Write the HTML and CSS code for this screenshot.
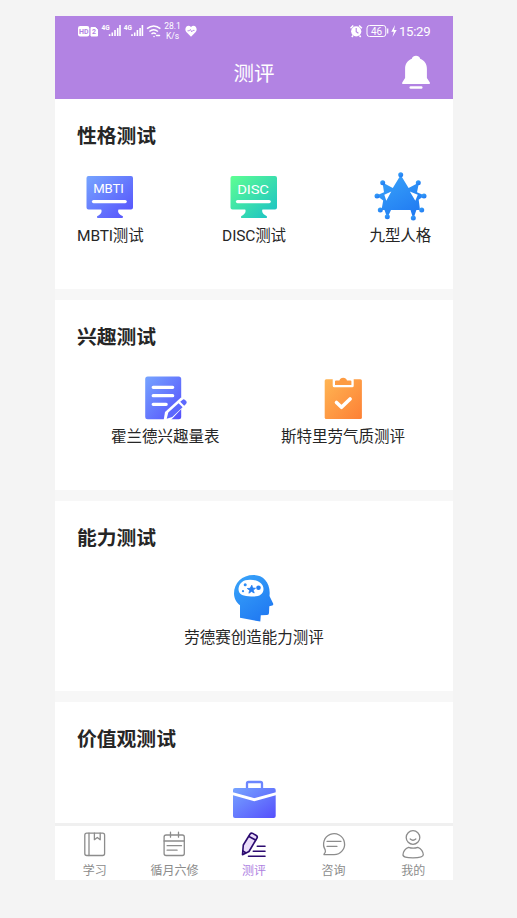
FILE: index.html
```html
<!DOCTYPE html>
<html lang="zh-CN">
<head>
<meta charset="utf-8">
<title>测评</title>
<link rel="stylesheet" href="styles.css">
</head>
<body>
<svg class="defs" width="0" height="0" aria-hidden="true">
  <defs>
    <linearGradient id="indigo" x1="0" y1="0" x2="1" y2="1"><stop offset="0" stop-color="#76a4ff"/><stop offset="1" stop-color="#554ffc"/></linearGradient>
    <linearGradient id="green" x1="0" y1="0" x2="1" y2="1"><stop offset="0" stop-color="#5eff92"/><stop offset="1" stop-color="#18bfc8"/></linearGradient>
    <linearGradient id="blue" x1="0" y1="0" x2=".6" y2="1"><stop offset="0" stop-color="#39a5fa"/><stop offset="1" stop-color="#217bf2"/></linearGradient>
    <linearGradient id="orange" x1="0" y1="0" x2="1" y2="1"><stop offset="0" stop-color="#ffb553"/><stop offset="1" stop-color="#fd8035"/></linearGradient>
  </defs>
</svg>
<div class="phone">
  <header class="header">
    <div class="status">
      <svg width="86" height="22" viewBox="0 0 86 22">
        <rect x="1" y="6" width="11.3" height="10.5" rx="2.2" fill="#fff"/>
        <text x="2" y="14" class="chip">HD</text>
        <path d="M14 7.5h4.500l2 2v6.500H14z" fill="#fff" stroke="#fff" stroke-linejoin="round"/>
        <text x="15" y="14.300" class="chip">2</text>
        <text x="24.500" y="10.200" class="net">4G</text>
        <path d="M32.600 16v-1.700M35.300 16v-3.500M38 16v-6M40.700 16V8M43 16V5" stroke="#fff" stroke-width="1.600"/>
        <text x="46.800" y="10.200" class="net">4G</text>
        <path d="M55 16v-1.700M57.700 16v-3.500M60.400 16v-6M63.100 16V8M65.400 16V5" stroke="#fff" stroke-width="1.600"/>
        <g fill="none" stroke="#fff" stroke-width="1.500"><path d="M70 8.700q6.700-5.500 13.400 0M72.400 11.500q4.300-3.500 8.600 0M74.500 14q2.200-1.800 4.400 0"/><path d="M77 16.500h.1M79.500 15.500h3" stroke-linecap="round"/></g>
      </svg>
      <div class="speed"><span>28.1</span><span>K/s</span></div>
      <svg class="heart" width="14" height="22" viewBox="0 0 14 22"><path d="M7 16.700 2.300 12C-.5 8.500 3.500 3.500 7 7c3.500-3.500 7.500 1.500 4.700 5z" fill="#fff"/><path d="M3.500 10.800h1.700l1.200-1.400 1.300 2.500 1.200-1.500h1.600" fill="none" stroke="#b283e3" stroke-width=".9"/></svg>
      <svg class="push" width="49" height="22" viewBox="0 0 49 22">
        <circle cx="6.200" cy="11.300" r="5.100" fill="#fff"/><path d="M.5 8.200 3.300 5.500M9.100 5.500l2.800 2.700M3 15.500 1.800 17M9.500 15.500l1.200 1.500" stroke="#fff" stroke-width="1.500"/><path d="M6.200 8v3.700l2.200 1.500" fill="none" stroke="#b283e3" stroke-width="1.100"/>
        <rect x="17" y="5.500" width="18.800" height="11" rx="2.500" fill="none" stroke="#fff"/><path d="M37.700 8.500v5" stroke="#fff" stroke-width="1.200"/><text x="20.900" y="14.700" class="battery">46</text>
        <path d="m45 5-3.700 6.800h2.500L42.500 17l4.200-7h-2.600z" fill="#fff"/>
      </svg>
      <span class="time">15:29</span>
    </div>
    <div class="navbar">
      <span></span>
      <h1>测评</h1>
      <svg class="bell" width="30" height="36" viewBox="0 0 30 36" fill="#fff"><path d="M10.800 4.700a4.500 4.500 0 0 1 8.400 0c4.500 1.700 6.700 5.500 6.700 10V24l2.800 4.200c.7 1.100.1 1.800-.8 1.800H2.200c-1 0-1.500-.8-.8-1.800L4.100 24v-9.300c0-4.500 2.200-8.300 6.700-10z"/><rect x="8.500" y="32.300" width="13" height="2.500" rx="1.200"/></svg>
    </div>
  </header>

  <main class="content">
    <section class="card">
      <h2>性格测试</h2>
      <div class="row triple">
        <div class="item">
          <svg width="60" height="50" viewBox="0 0 60 50"><path d="M8.500 4h42.500a2 2 0 0 1 2 2v29.500a2 2 0 0 1-2 2H38.500c-1.500 3 1.500 5.500 4 6.500.9.500.6 2-.5 2H18c-1.200 0-1.400-1.500-.5-2 3-1.500 5-4 3.700-6.500H8.500a2 2 0 0 1-2-2V6a2 2 0 0 1 2-2z" fill="url(#indigo)"/><path d="M13.500 29.600h31.700" stroke="#fff" stroke-width="3.200" stroke-linecap="round"/><text x="13.300" y="21.200" class="screen" textLength="30.300" lengthAdjust="spacingAndGlyphs">MBTI</text></svg>
          <span>MBTI测试</span>
        </div>
        <div class="item">
          <svg width="60" height="50" viewBox="0 0 60 50"><path d="M8.500 4h42.500a2 2 0 0 1 2 2v29.500a2 2 0 0 1-2 2H38.500c-1.500 3 1.500 5.500 4 6.500.9.500.6 2-.5 2H18c-1.200 0-1.400-1.500-.5-2 3-1.500 5-4 3.700-6.500H8.500a2 2 0 0 1-2-2V6a2 2 0 0 1 2-2z" fill="url(#green)"/><path d="M13.500 29.600h31.700" stroke="#fff" stroke-width="3.200" stroke-linecap="round"/><text x="13.300" y="21.800" class="screen" textLength="31.500" lengthAdjust="spacingAndGlyphs">DISC</text></svg>
          <span>DISC测试</span>
        </div>
        <div class="item">
          <svg width="60" height="50" viewBox="0 0 60 50" fill="url(#blue)"><path d="M30.700 3 38.600 16 49 10.500 47 20.300 54.500 23.500 48.700 27.800 50 38H46.400L43.300 47 40.500 38H21L17.300 46 14.500 38H11.500L13.200 28.500 6.500 23.500 14 20.300 12.500 10.500 22.800 16z"/><path d="m39.800 19.500 8 3.300-2.500 6zM21.300 19.500l-7 3.300 2 6z" fill="#fff"/><circle cx="30.700" cy="2.800" r="2.500"/><circle cx="48.300" cy="10.700" r="2.500"/><circle cx="54" cy="24" r="2.500"/><circle cx="51.700" cy="38" r="2.500"/><circle cx="43.300" cy="46" r="2.500"/><circle cx="17.300" cy="44.700" r="2.500"/><circle cx="10.300" cy="38" r="2.500"/><circle cx="7" cy="24" r="2.500"/><circle cx="12.700" cy="10.700" r="2.500"/></svg>
          <span>九型人格</span>
        </div>
      </div>
    </section>

    <section class="card">
      <h2>兴趣测试</h2>
      <div class="row pair">
        <div class="item">
          <svg width="60" height="50" viewBox="0 0 60 50"><rect x="10.200" y="3.500" width="36" height="42.700" rx="2.500" fill="url(#indigo)"/><path d="M18.200 14.300h19.500M18.200 22.700h19.500M18.200 31.300h13" stroke="#fff" stroke-width="3.200" stroke-linecap="round"/><path d="m28.500 48 1.500-9L46 24.500 53 29 35 48z" fill="#fff"/><path d="m33.300 39.600 10.300-9.300 4 4-10.300 9.800-5.600 1.600zM45.200 28.800l2.200-1.900a2 2 0 0 1 2.600 0l1.200 1.200a2 2 0 0 1 0 2.600l-2 2.100z" fill="#5d68fd"/></svg>
          <span>霍兰德兴趣量表</span>
        </div>
        <div class="item">
          <svg width="60" height="50" viewBox="0 0 60 50"><rect x="11.700" y="6.300" width="37.200" height="39.700" rx="1.500" fill="url(#orange)"/><path d="M19.700 5.500h21v7.200a1.500 1.500 0 0 1-1.500 1.500h-18a1.500 1.500 0 0 1-1.500-1.500z" fill="#fff"/><path d="M22 12V8.500q0-1 1-1h3.400a4 4 0 0 1 7.600 0h3.400q1 0 1 1V12z" fill="#fd9b42"/><path d="m23.500 29.500 5 4.800 8.600-8.300" fill="none" stroke="#fff" stroke-width="3.600" stroke-linecap="round" stroke-linejoin="round"/></svg>
          <span>斯特里劳气质测评</span>
        </div>
      </div>
    </section>

    <section class="card">
      <h2>能力测试</h2>
      <div class="row single">
        <div class="item">
          <svg width="60" height="50" viewBox="0 0 60 50"><path d="M29.500 1C18 1 10 9 10 19.500c0 5 2.500 9 6 11.700v12.500l20.300 3.900.5-6.300 6.200-.2q2-.1 2-2l.3-6.800 3-.8q1.500-.8.7-2.300L45.500 22C47 9 39.500 1 29.500 1z" fill="url(#blue)"/><path d="M14.500 15C15 9 19 5.700 26 5.700c8 0 13.500 4 13.500 9.300 0 6-5.500 8-12.500 7.500-7-.2-12.500-1.500-12.500-7.500z" fill="#fff"/><path d="m27.800 11.200.9 2.800 2.800.3-2.300 1.800 1 2.900-2.700-1.600-2.600 1.800.8-3-2.400-1.700 2.900-.2z" fill="#237ef3" stroke="#237ef3" stroke-width=".8" stroke-linejoin="round"/><circle cx="34.500" cy="13.700" r="2.300" fill="#237ef3"/><circle cx="21.200" cy="10.700" r="1.500" fill="#2d8df6"/><circle cx="19" cy="17.200" r="1.100" fill="#2d8df6"/></svg>
          <span>劳德赛创造能力测评</span>
        </div>
      </div>
    </section>

    <section class="card">
      <h2>价值观测试</h2>
      <div class="row single">
        <div class="item">
          <svg width="60" height="50" viewBox="0 0 60 50"><path d="M23 14V8.500q0-1.500 1.500-1.500h12Q38 7 38 8.500V14" fill="none" stroke="#6c86fe" stroke-width="2.300"/><rect x="9" y="13" width="42.700" height="30" rx="2" fill="url(#indigo)"/><path d="m8.500 18.700 21.800 6 22-6" fill="none" stroke="#fff" stroke-width="2.800"/></svg>
        </div>
      </div>
    </section>
  </main>

  <nav class="tabs">
    <div class="tab">
      <svg width="32" height="32" viewBox="0 0 32 32"><rect x="5.800" y="4.200" width="19.800" height="22.300" rx="2"/><path d="M10 4.200v22.300M15.400 4.200v6.500l2.900-2.200 2.900 2.200V4.200"/></svg>
      <span>学习</span>
    </div>
    <div class="tab">
      <svg width="32" height="32" viewBox="0 0 32 32"><rect x="6.100" y="6" width="20.200" height="20.500" rx="2"/><path d="M6.100 12h20.200M12.500 3.200v5M20.500 3.200v5M9.100 16.700h14.400M9.100 21.200h10"/></svg>
      <span>循月六修</span>
    </div>
    <div class="tab active">
      <svg width="32" height="32" viewBox="0 0 32 32"><path d="M4.500 25.700 5.300 16l6.800-11q1-1.500 2.600-.6l3.600 2.100q1.600 1 .7 2.500l-8 13.500z" fill="#eadcfa"/><path d="M11 7.500 17.500 11M4.800 22l3 1.700" /><path d="M19.300 17.300H27M15.300 22.300H27M10.500 27.300H27"/></svg>
      <span>测评</span>
    </div>
    <div class="tab">
      <svg width="32" height="32" viewBox="0 0 32 32"><path d="M16 25.700a10.500 10.500 0 1 0-8.800-4.900c.5 1.200.3 3-1.200 4.500q-.2.500.6.400zM9 12.300h14M9 17.300h10"/></svg>
      <span>咨询</span>
    </div>
    <div class="tab">
      <svg width="32" height="32" viewBox="0 0 32 32"><circle cx="16" cy="8.500" r="6.800"/><path d="M13.200 10q2.800 2.500 5.600 0M11.500 18.300q4.700 1.700 9.300 0c3.300 1 5.500 4.500 5.500 7.500q0 3-10.300 3T6 25.800c0-3 2.200-6.500 5.500-7.500z"/></svg>
      <span>我的</span>
    </div>
  </nav>
</div>
</body>
</html>
```

FILE: styles.css
```css
* { box-sizing: border-box; }

body {
  margin: 0;
  height: 918px;
  padding: 16px 0 0 55px;
  background: #f4f4f4;
  color: #262626;
  font-family: Roboto, "Noto Sans CJK SC", sans-serif;
  overflow: hidden;
}

.defs { display: block; }

svg { display: block; flex: none; }

h1, h2 { margin: 0; }

.phone {
  width: 398px;
  height: 864px;
  display: flex;
  flex-direction: column;
  background: #f7f7f7;
}

.header {
  flex: none;
  height: 83px;
  background: #b283e3;
  color: #fff;
}

.status {
  display: flex;
  align-items: center;
  height: 30px;
  padding: 0 22px;
}

.chip { font: bold 7px Roboto, sans-serif; fill: #b283e3; }
.net { font: bold 6.5px Roboto, sans-serif; fill: #fff; }
.battery { font: 10px Roboto, sans-serif; fill: #fff; }
.screen { font: 400 12px Roboto, sans-serif; fill: #fff; }

.speed {
  width: 19px;
  margin-right: 2px;
  display: flex;
  flex-direction: column;
  align-items: center;
  font-size: 8.5px;
  line-height: 10px;
}

.push { margin-left: auto; }

.time {
  width: 32px;
  font-size: 13.2px;
  line-height: 20px;
  letter-spacing: -0.3px;
  padding-top: 1px;
  white-space: nowrap;
}

.navbar {
  display: grid;
  grid-template-columns: 1fr auto 1fr;
  align-items: center;
  height: 53px;
  padding: 0 22px;
}

.navbar h1 {
  font-size: 20.5px;
  font-weight: 400;
  line-height: 30px;
  margin-top: 2px;
}

.bell { justify-self: end; margin-bottom: 1px; }

.content {
  flex: 1;
  min-height: 0;
  overflow: hidden;
  display: flex;
  flex-direction: column;
  gap: 11px;
}

.card {
  flex: none;
  height: 190px;
  padding: 23px 22px 0;
  background: #fff;
}

.card h2 {
  font-size: 19.8px;
  font-weight: 700;
  line-height: 30px;
}

.row {
  display: flex;
  justify-content: space-between;
  margin-top: 20px;
}

.triple {
  display: grid;
  grid-template-columns: 1fr auto 1fr;
}

.triple .item:first-child { justify-self: start; }
.triple .item:last-child { justify-self: end; }
.triple .item { letter-spacing: -0.15px; }

.pair { padding: 0 26px 0 34px; }
.single { justify-content: center; }

.item {
  display: flex;
  flex-direction: column;
  align-items: center;
  font-size: 15.5px;
  line-height: 28px;
  white-space: nowrap;
}

.tabs {
  flex: none;
  display: flex;
  height: 57px;
  padding-top: 3px;
  border-top: 3px solid #f0f0f0;
  background: #fff;
}

.tab {
  flex: 1;
  display: flex;
  flex-direction: column;
  align-items: center;
  color: #8c8c8c;
  font-size: 12px;
  line-height: 20px;
}

.tab svg {
  fill: none;
  stroke: #8c8c8c;
  stroke-width: 1.3;
  stroke-linecap: round;
  stroke-linejoin: round;
}

.active { color: #ae82df; }
.active svg { stroke: #2c0b70; stroke-width: 1.6; }
```
